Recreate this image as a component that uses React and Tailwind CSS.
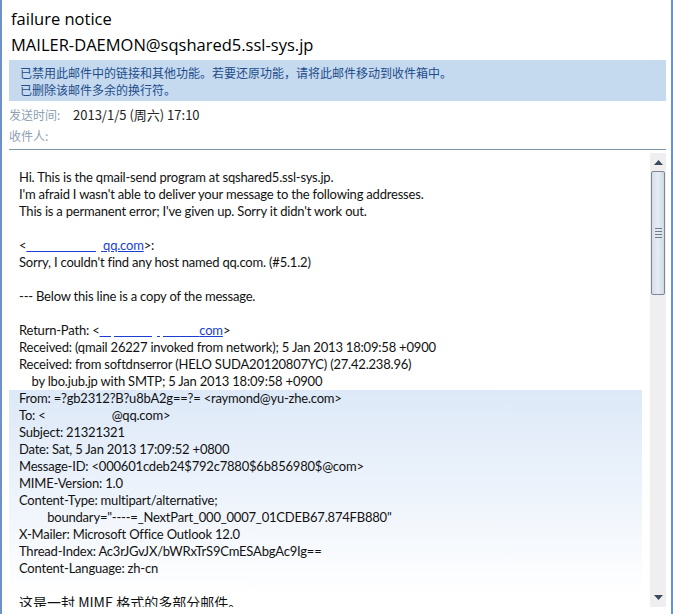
import React from "react";

const cjk = { fontFamily: '"Noto Sans CJK SC", "Noto Sans", sans-serif' };

function Line({ children, className = "", style }) {
  return (
    <div className={"h-[17px] leading-[17px] whitespace-pre " + className} style={style}>
      {children}
    </div>
  );
}

function Hidden({ children }) {
  return <span className="text-transparent">{children}</span>;
}

function Scrollbar() {
  return (
    <div className="w-[16px] mt-[3px] bg-[#efefef] flex flex-col items-center shrink-0">
      <div className="h-[18px] flex items-center justify-center">
        <svg width="9" height="5" viewBox="0 0 9 5">
          <path d="M0 5 L4.5 0 L9 5 Z" fill="#3c4a5c" />
        </svg>
      </div>
      <div className="w-[14px] h-[124px] rounded-[2px] border border-[#7d8794] bg-gradient-to-r from-[#d6dee9] via-[#e6ecf4] to-[#cfd9e6] flex flex-col items-center justify-center gap-[2px]">
        <div className="w-[7px] h-px bg-[#6e7c8d]" />
        <div className="w-[7px] h-px bg-[#6e7c8d]" />
        <div className="w-[7px] h-px bg-[#6e7c8d]" />
        <div className="w-[7px] h-px bg-[#6e7c8d]" />
      </div>
      <div className="flex-1" />
      <div className="h-[18px] flex items-center justify-center mb-[1px]">
        <svg width="9" height="5" viewBox="0 0 9 5">
          <path d="M0 0 L4.5 5 L9 0 Z" fill="#3c4a5c" />
        </svg>
      </div>
    </div>
  );
}

export default function App() {
  return (
    <div className="w-[673px] h-[614px] overflow-hidden bg-white flex border-l-2 border-l-[#6e92c8] border-r-2 border-r-[#6e92c8]">
      <div className="flex-1 flex flex-col pl-[7px] pr-[5px] pb-[7px]">
        <div
          className="pt-[6px] pl-[2px] text-[16.5px] leading-[26px] text-black"
          style={{ fontFamily: '"Open Sans", "Noto Sans", sans-serif' }}
        >
          <div>failure notice</div>
          <div>MAILER-DAEMON@sqshared5.ssl-sys.jp</div>
        </div>
        <div className="mt-[2px] bg-[#c5d9ef] pl-[11px] pt-[4px] pb-[3px] text-[12px] leading-[17px] text-[#1d4d8a]" style={cjk}>
          <div>已禁用此邮件中的链接和其他功能。若要还原功能，请将此邮件移动到收件箱中。</div>
          <div>已删除该邮件多余的换行符。</div>
        </div>
        <div className="pt-[3px] text-[12px] leading-[21px]" style={cjk}>
          <div className="flex">
            <span className="w-[64px] text-[#8d9fb3]">发送时间:</span>
            <span className="text-[13px] text-[#222]">2013/1/5 (周六) 17:10</span>
          </div>
          <div className="flex">
            <span className="w-[64px] text-[#8d9fb3]">收件人:</span>
          </div>
        </div>
        <div className="mt-[3px] h-px bg-[#7b95aa]" />
        <div className="flex-1 flex min-h-0">
          <div
            className="flex-1 pt-[19px] text-[13px] tracking-[-0.2px] text-[#111] overflow-hidden"
            style={{ fontFamily: 'Lato, "Liberation Sans", sans-serif' }}
          >
            <div className="pl-[10px]">
              <Line>Hi. This is the qmail-send program at sqshared5.ssl-sys.jp.</Line>
              <Line>I'm afraid I wasn't able to deliver your message to the following addresses.</Line>
              <Line>This is a permanent error; I've given up. Sorry it didn't work out.</Line>
              <Line> </Line>
              <Line>
                {"<"}
                <span className="underline decoration-[#1a3fd0] text-[#1a3fd0]">
                  <Hidden>215677777@</Hidden>qq.com
                </span>
                {">:"}
              </Line>
              <Line>Sorry, I couldn't find any host named qq.com. (#5.1.2)</Line>
              <Line> </Line>
              <Line>--- Below this line is a copy of the message.</Line>
              <Line> </Line>
              <Line>
                {"Return-Path: <"}
                <span className="underline decoration-[#1a3fd0] text-[#1a3fd0]">
                  <Hidden>raymond@yu-zhe.</Hidden>com
                </span>
                {">"}
              </Line>
              <Line>Received: (qmail 26227 invoked from network); 5 Jan 2013 18:09:58 +0900</Line>
              <Line>Received: from softdnserror (HELO SUDA20120807YC) (27.42.238.96)</Line>
              <Line>{"    by lbo.jub.jp with SMTP; 5 Jan 2013 18:09:58 +0900"}</Line>
            </div>
            <div className="mr-[8px] pl-[10px] bg-gradient-to-b from-[#dde9f8] via-[#edf3fb] to-white pb-[17px]">
              <Line>{"From: =?gb2312?B?u8bA2g==?= <raymond@yu-zhe.com>"}</Line>
              <Line>
                {"To: <"}
                <Hidden>215677777</Hidden>
                {"@qq.com>"}
              </Line>
              <Line>Subject: 21321321</Line>
              <Line>Date: Sat, 5 Jan 2013 17:09:52 +0800</Line>
              <Line>{"Message-ID: <000601cdeb24$792c7880$6b856980$@com>"}</Line>
              <Line>MIME-Version: 1.0</Line>
              <Line>Content-Type: multipart/alternative;</Line>
              <Line>{'         boundary="----=_NextPart_000_0007_01CDEB67.874FB880"'}</Line>
              <Line>X-Mailer: Microsoft Office Outlook 12.0</Line>
              <Line>Thread-Index: Ac3rJGvJX/bWRxTrS9CmESAbgAc9Ig==</Line>
              <Line>Content-Language: zh-cn</Line>
            </div>
            <div className="pl-[10px]">
              <Line className="text-[14px] tracking-normal" style={cjk}>
                这是一封 MIME 格式的多部分邮件。
              </Line>
            </div>
          </div>
          <Scrollbar />
        </div>
      </div>
    </div>
  );
}
